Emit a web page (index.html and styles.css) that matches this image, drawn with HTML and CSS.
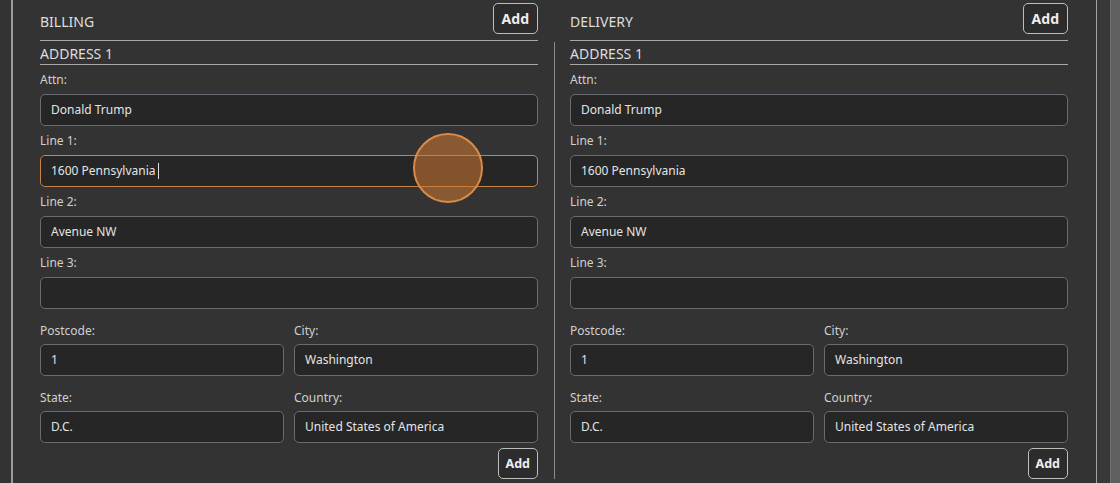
FILE: index.html
```html
<!DOCTYPE html>
<html>
<head>
<meta charset="utf-8">
<link rel="stylesheet" href="styles.css">
</head>
<body>
<div class="page">
  <div class="gutter"></div>
  <div class="panel">
    <div class="columns">
      <section class="col">
        <div class="head">
          <h2 class="title">BILLING</h2>
          <button class="btn btn-top">Add</button>
        </div>
        <h3 class="sub">ADDRESS 1</h3>
        <div class="field"><label>Attn:</label><div class="input">Donald Trump</div></div>
        <div class="field"><label>Line 1:</label><div class="input focus">1600 Pennsylvania <span class="caret"></span></div></div>
        <div class="field"><label>Line 2:</label><div class="input">Avenue NW</div></div>
        <div class="field"><label>Line 3:</label><div class="input"></div></div>
        <div class="grid">
          <div class="field"><label>Postcode:</label><div class="input">1</div></div>
          <div class="field"><label>City:</label><div class="input">Washington</div></div>
          <div class="field"><label>State:</label><div class="input">D.C.</div></div>
          <div class="field"><label>Country:</label><div class="input">United States of America</div></div>
        </div>
        <div class="foot"><button class="btn">Add</button></div>
      </section>
      <div class="divider"></div>
      <section class="col">
        <div class="head">
          <h2 class="title">DELIVERY</h2>
          <button class="btn btn-top">Add</button>
        </div>
        <h3 class="sub">ADDRESS 1</h3>
        <div class="field"><label>Attn:</label><div class="input">Donald Trump</div></div>
        <div class="field"><label>Line 1:</label><div class="input">1600 Pennsylvania</div></div>
        <div class="field"><label>Line 2:</label><div class="input">Avenue NW</div></div>
        <div class="field"><label>Line 3:</label><div class="input"></div></div>
        <div class="grid">
          <div class="field"><label>Postcode:</label><div class="input">1</div></div>
          <div class="field"><label>City:</label><div class="input">Washington</div></div>
          <div class="field"><label>State:</label><div class="input">D.C.</div></div>
          <div class="field"><label>Country:</label><div class="input">United States of America</div></div>
        </div>
        <div class="foot"><button class="btn">Add</button></div>
      </section>
    </div>
  </div>
  <div class="strip"></div>
  <div class="scrollbar"></div>
  <div class="touch"></div>
</div>
</body>
</html>
```

FILE: styles.css
```css
* { box-sizing: border-box; }
html, body { margin: 0; padding: 0; }
body {
  background: #333333;
  font-family: "Noto Sans", "Open Sans", sans-serif;
  color: #dcdcdc;
  width: 1120px;
  height: 483px;
  overflow: hidden;
}
.page {
  display: flex;
  height: 483px;
  position: relative;
}
.gutter { width: 11px; flex: none; }
.panel {
  width: 1086px;
  flex: none;
  border-left: 2px solid #9b9b9b;
  border-right: 1px solid #a3a3a3;
  padding: 0 28px 0 27px;
}
.strip { width: 13px; flex: none; background: #383838; }
.scrollbar { width: 10px; flex: none; background: #5f5f5f; border-left: 1px solid #707070; }
.columns {
  display: grid;
  grid-template-columns: 498px 32px 498px;
}
.col { display: flex; flex-direction: column; }
.divider {
  margin-top: 42px;
  display: flex;
  justify-content: center;
}
.divider::before {
  content: "";
  width: 1px;
  background: #8a8a8a;
  display: block;
  margin-left: 1px;
}
.head {
  height: 41px;
  display: flex;
  justify-content: space-between;
  align-items: flex-start;
  padding-top: 3px;
  border-bottom: 1px solid #a8a8a8;
}
.title {
  margin: 0;
  padding-top: 9px;
  font-size: 14px;
  line-height: 20px;
  font-weight: 400;
  color: #dedede;
}
.sub {
  margin: 0;
  height: 24px;
  padding-top: 3px;
  font-size: 14px;
  line-height: 20px;
  font-weight: 400;
  color: #dedede;
  border-bottom: 1px solid #a8a8a8;
}
.btn {
  font-family: "Noto Sans", "Open Sans", sans-serif;
  font-weight: 700;
  font-size: 12.5px;
  color: #eeeeee;
  background: #2c2c2c;
  border: 1px solid #bdbdbd;
  border-radius: 5px;
  height: 31px;
  padding: 0 7px;
  line-height: 29px;
}
.btn-top { font-size: 14px; height: 31px; padding: 0 8px; }
.field { display: flex; flex-direction: column; padding-top: 7px; }
label {
  font-size: 12px;
  line-height: 16px;
  color: #d0d0d0;
  margin-bottom: 6px;
}
.input {
  height: 32px;
  background: #262626;
  border: 1px solid #676c72;
  border-radius: 5px;
  padding: 0 10px;
  font-size: 12px;
  line-height: 30px;
  color: #e4e4e4;
  white-space: nowrap;
}
.input.focus { border: 1.5px solid #c98440; }
.caret {
  display: inline-block;
  width: 1px;
  height: 16px;
  background: #e0e0e0;
  vertical-align: -4px;
  margin-left: -1px;
}
.grid {
  display: grid;
  grid-template-columns: 1fr 1fr;
  column-gap: 10px;
  row-gap: 6px;
  margin-top: 6px;
}
.grid .field { padding-top: 8px; }
.grid label { margin-bottom: 5px; }
.foot {
  display: flex;
  justify-content: flex-end;
  padding-top: 5px;
}
.touch {
  position: absolute;
  left: 413px;
  top: 133px;
  width: 70px;
  height: 70px;
  border-radius: 50%;
  background: rgba(208, 120, 50, 0.55);
  border: 2px solid #d88a48;
}
```
